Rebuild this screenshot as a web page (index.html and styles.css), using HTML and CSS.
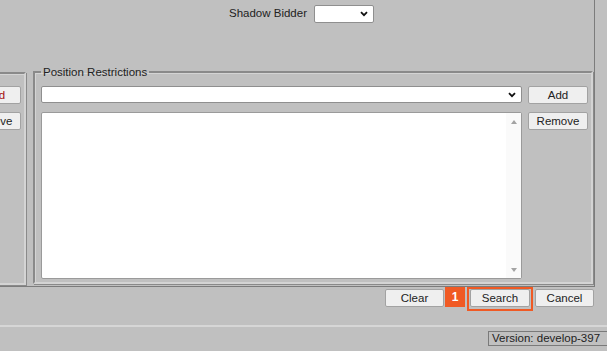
FILE: index.html
```html
<!DOCTYPE html>
<html lang="en">
<head>
    <meta charset="UTF-8">
    <title>Search</title>
    <link rel="stylesheet" href="styles.css">
</head>
<body>
    <div class="panel">
        <div class="top">
            <span class="field-label">Shadow Bidder</span>
            <div class="select select-small">
                <svg width="8" height="6" viewBox="0 0 8 6"><path d="M1 1.2 L4 4.2 L7 1.2" fill="none" stroke="#111" stroke-width="1.8"/></svg>
            </div>
        </div>

        <div class="groups">
            <fieldset class="group group-side">
                <button class="btn btn-alert">Add</button>
                <button class="btn">Remove</button>
            </fieldset>

            <fieldset class="group group-main">
                <legend>Position Restrictions</legend>
                <div class="select">
                    <svg width="8" height="6" viewBox="0 0 8 6"><path d="M1 1.2 L4 4.2 L7 1.2" fill="none" stroke="#111" stroke-width="1.8"/></svg>
                </div>
                <button class="btn">Add</button>
                <div class="listbox">
                    <div class="listbox-bar">
                        <span class="arrow arrow-up"></span>
                        <span class="arrow arrow-down"></span>
                    </div>
                </div>
                <button class="btn">Remove</button>
            </fieldset>
        </div>
    </div>

    <div class="actions">
        <button class="btn btn-action">Clear</button>
        <span class="step">1</span>
        <span class="highlight"><button class="btn btn-action btn-search">Search</button></span>
        <button class="btn btn-action">Cancel</button>
    </div>

    <div class="status">
        <span class="version">Version: develop-397</span>
    </div>
</body>
</html>
```

FILE: styles.css
```css
body {
    margin: 0;
    width: 607px;
    height: 351px;
    overflow: hidden;
    background-color: #c0c0c0;
    font-family: "Liberation Sans", Arial, sans-serif;
    font-size: 11.5px;
    color: #222;
}

.panel {
    width: 595px;
    height: 287px;
    box-sizing: border-box;
    border-right: 1px solid #7c7c7c;
    border-bottom: 1px solid #7c7c7c;
    overflow: hidden;
}

.top {
    height: 65px;
    box-sizing: border-box;
    padding: 5px 0 0 229px;
    display: flex;
    align-items: flex-start;
    gap: 7px;
}

.field-label {
    line-height: 17px;
}

.select {
    height: 17px;
    box-sizing: border-box;
    background: #fff;
    border: 1px solid #8f8f8f;
    border-radius: 2px;
    display: flex;
    align-items: center;
    justify-content: flex-end;
    padding-right: 5px;
}

.select-small {
    width: 60px;
    height: 18px;
}

.groups {
    display: flex;
    gap: 7px;
    padding-right: 1px;
}

.group {
    margin: 0;
    border: 2px solid;
    border-color: #8a8a8a #d4d4d4 #d4d4d4 #8a8a8a;
    box-shadow: inset 1px 1px 0 #d4d4d4, 1px 1px 0 #8a8a8a;
    min-inline-size: 0;
}

.group legend {
    padding: 0 2px;
    line-height: 14px;
}

.group-side {
    box-sizing: border-box;
    width: 70px;
    margin-left: -44px;
    margin-top: 7px;
    height: 213px;
    padding: 12px 3px 0 3px;
    display: flex;
    flex-direction: column;
    gap: 8px;
}

.group-main {
    flex: 1;
    height: 219px;
    box-sizing: border-box;
    padding: 7px 3px 3px 6px;
    display: grid;
    grid-template-columns: 1fr 60px;
    grid-template-rows: 17px 167px;
    gap: 9px 6px;
    align-items: start;
}

.btn {
    width: 60px;
    height: 18px;
    padding: 0;
    font-family: inherit;
    font-size: 11.5px;
    color: #222;
    background-color: #efefef;
    border: 1px solid #a2a2a2;
    border-radius: 2px;
}

.btn-alert {
    color: #a50d0d;
    padding-left: 8px;
}

.listbox {
    height: 167px;
    box-sizing: border-box;
    background: #fff;
    border: 1px solid #9a9a9a;
    border-radius: 2px;
    display: flex;
    justify-content: flex-end;
}

.listbox-bar {
    width: 15px;
    background: #fafafa;
    display: flex;
    flex-direction: column;
    justify-content: space-between;
    align-items: center;
    padding: 7px 0 6px;
}

.arrow {
    width: 0;
    height: 0;
    border-left: 3.5px solid transparent;
    border-right: 3.5px solid transparent;
}

.arrow-up {
    border-bottom: 4px solid #a3a3a3;
}

.arrow-down {
    border-top: 4px solid #a3a3a3;
}

.actions {
    height: 38px;
    display: flex;
    justify-content: flex-end;
    align-items: flex-start;
    padding-right: 13px;
}

.btn-action {
    width: 59px;
    margin-top: 2px;
}

.step {
    width: 20px;
    height: 20px;
    margin-left: 1px;
    background-color: #f05a24;
    color: #fff;
    font-weight: bold;
    font-size: 12px;
    line-height: 20px;
    text-align: center;
}

.highlight {
    margin: 0 2px;
    padding: 0 1px 2px;
    border: 2px solid #f05a24;
    display: flex;
}

.btn-search {
    width: 60px;
    margin-top: 0;
}

.status {
    height: 20px;
    border-top: 2px solid #d6d6d6;
    border-bottom: 2px solid #6e6e6e;
    padding: 4px 0 0 488px;
    box-sizing: content-box;
}

.version {
    display: block;
    height: 15px;
    box-sizing: border-box;
    border: 1px solid #7a7a7a;
    border-right: none;
    padding-left: 3px;
    line-height: 13px;
}
```
